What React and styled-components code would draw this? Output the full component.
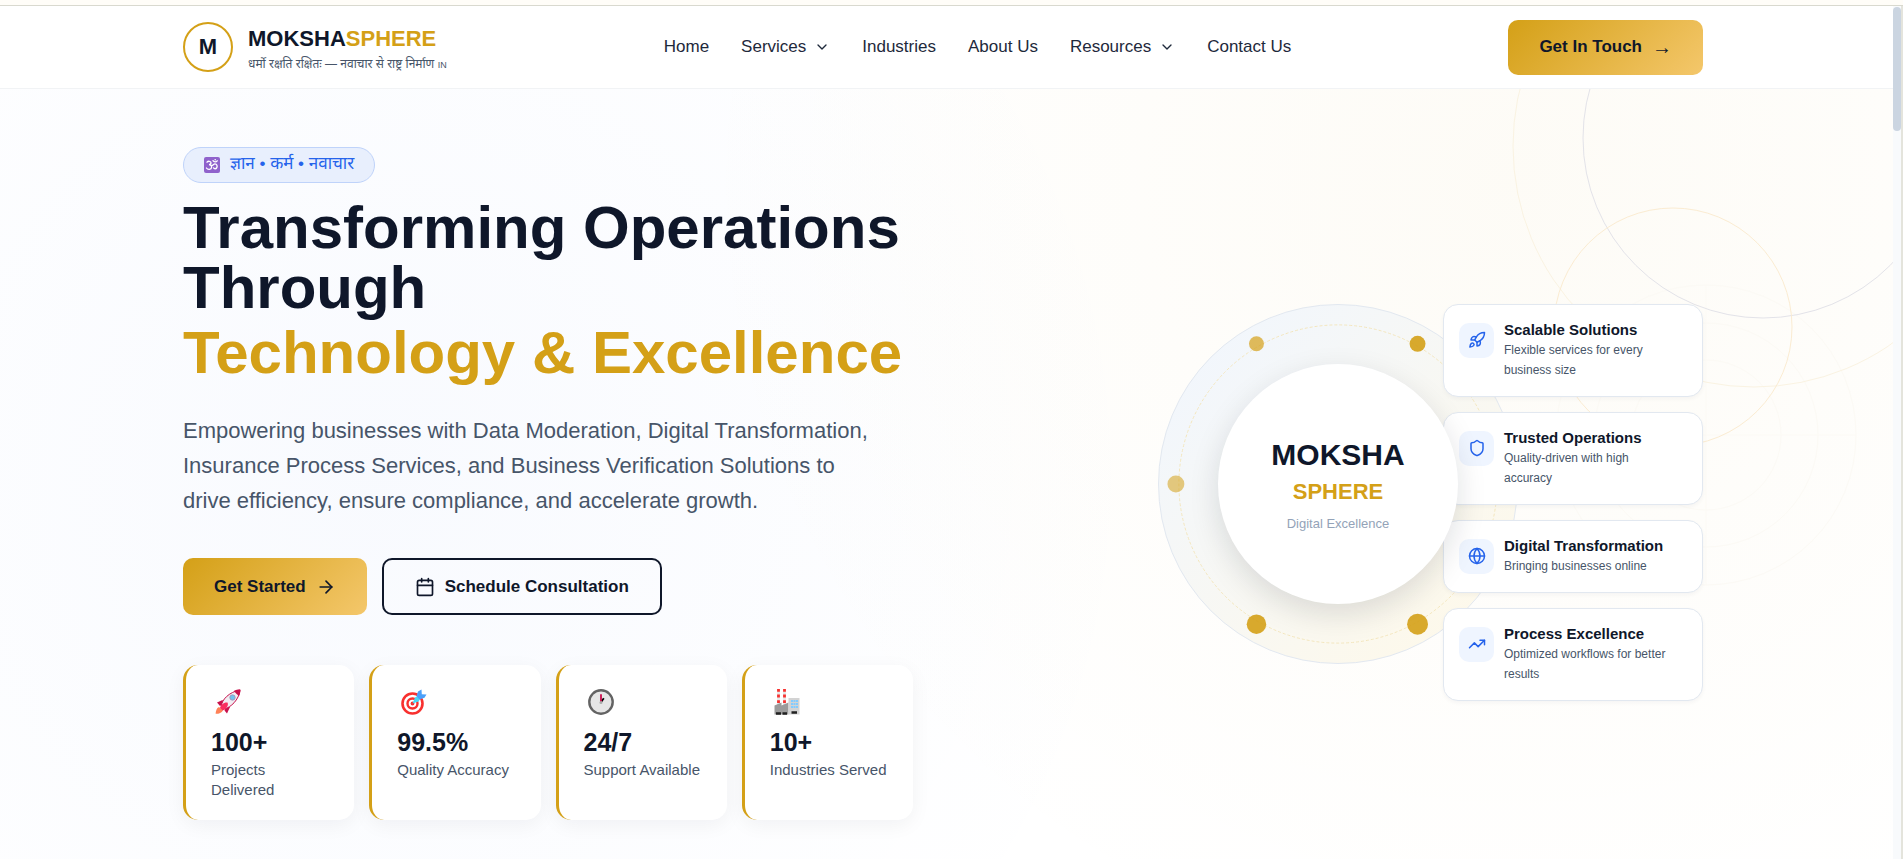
import styled, { createGlobalStyle } from "styled-components";
import {
  ArrowRight,
  Calendar,
  ChevronDown,
  Globe,
  Rocket,
  Shield,
  TrendingUp,
} from "lucide-react";

const navLinks = [
  { label: "Home" },
  { label: "Services", hasMenu: true },
  { label: "Industries" },
  { label: "About Us" },
  { label: "Resources", hasMenu: true },
  { label: "Contact Us" },
];

const features = [
  {
    icon: Rocket,
    title: "Scalable Solutions",
    text: "Flexible services for every business size",
  },
  {
    icon: Shield,
    title: "Trusted Operations",
    text: "Quality-driven with high accuracy",
  },
  {
    icon: Globe,
    title: "Digital Transformation",
    text: "Bringing businesses online",
  },
  {
    icon: TrendingUp,
    title: "Process Excellence",
    text: "Optimized workflows for better results",
  },
];

const orbitDots = [
  { cx: 98, cy: 39, r: 7.5, opacity: 0.7 },
  { cx: 260, cy: 39, r: 8, opacity: 0.9 },
  { cx: 17, cy: 180, r: 8.5, opacity: 0.55 },
  { cx: 98, cy: 321, r: 9.8, opacity: 0.9 },
  { cx: 260, cy: 321, r: 10.5, opacity: 0.9 },
];

const OmIcon = () => (
  <svg width="16" height="16" viewBox="0 0 16 16" aria-hidden="true">
    <rect width="16" height="16" rx="2" fill="#8f62cc" />
    <g fill="none" stroke="#fff" strokeWidth="1.3" strokeLinecap="round">
      <path d="M3 5.2C4 3.8 7 4 7 5.8C7 7.2 5.8 7.6 5 7.6C6.4 7.6 7.8 8.4 7.6 10.4C7.3 12.8 3.8 13.2 2.4 11" />
      <path d="M7.2 8.4C8.8 9.4 9.4 6.8 11 6.9C12.9 7 13.6 9 12.8 10.6C12 12.2 10 12 9.6 10.8" />
      <path d="M9 3.6C10 5.2 12.2 5.2 13.2 3.8" />
    </g>
    <circle cx="11.2" cy="2.8" r="0.8" fill="#fff" />
  </svg>
);

const LaunchIcon = () => (
  <svg width="26" height="26" viewBox="0 0 26 26">
    <path d="M4 18C1.5 19 0.8 22 0.6 24.8C3.5 25 6.5 24 8 21.5Z" fill="#ff8257" />
    <path d="M2 13.5L7.5 11L9 14.5L5 17Z" fill="#c8114c" />
    <path d="M12 24.5L15 18L11.5 17.5L9.5 21.5Z" fill="#c8114c" />
    <path
      d="M6.5 17C6.5 11 14 3 25 1C24 11 15.5 18.5 9.5 20Z"
      fill="#f1edf2"
      stroke="#c8114c"
    />
    <path
      d="M19 1.8C21 1 23 0.5 25.4 0.6C25.5 3 25 5 24.2 6.8C22.5 6 20 4 19 1.8Z"
      fill="#c8114c"
    />
    <path d="M5 19C5.5 16 9 13 12.5 13.5C14 16.5 11 20.5 7.5 21.5Z" fill="#f92f60" />
    <circle cx="17.5" cy="8.5" r="2.7" fill="#6fc3ee" stroke="#a98bb0" strokeWidth="0.8" />
  </svg>
);

const TargetIcon = () => (
  <svg width="26" height="26" viewBox="0 0 26 26">
    <circle cx="11.5" cy="14.5" r="10" fill="#fff" stroke="#f8312f" strokeWidth="2.6" />
    <circle cx="11.5" cy="14.5" r="5" fill="#fff" stroke="#f8312f" strokeWidth="2.4" />
    <circle cx="11.5" cy="14.5" r="1.9" fill="#f8312f" />
    <path d="M11.5 14.5L14 8.5L18.5 6L20.5 8L17.5 12.5Z" fill="#4ad6f4" />
    <path
      d="M15.5 7L17 2.5L20.5 0.5L20.8 5.2L25.5 5.5L23.5 8.8L18.5 10.5Z"
      fill="#4aa0fa"
    />
  </svg>
);

const ClockIcon = () => (
  <svg width="26" height="26" viewBox="0 0 26 26">
    <circle cx="13" cy="13" r="11.7" fill="#e6e6e6" stroke="#636363" strokeWidth="2.4" />
    <path d="M13.5 12.5L15.8 9.2" stroke="#000" strokeWidth="1.8" />
    <path d="M13 13V5.2" stroke="#ca0b4a" strokeWidth="1.8" />
    <circle cx="13" cy="13.5" r="1.5" fill="#aaa" />
  </svg>
);

const FactoryIcon = () => (
  <svg width="26" height="26" viewBox="0 0 26 26">
    <path d="M4.5 0V16M10.5 0V16" stroke="#e6e6e6" strokeWidth="2.8" />
    <path
      d="M4.5 0V14M10.5 0V14"
      stroke="#f8312f"
      strokeWidth="2.8"
      strokeDasharray="2.8"
    />
    <path d="M0.5 25.5V16.5L7.5 13.5V16.5L14.5 13.5V25.5Z" fill="#9b9b9b" />
    <path d="M14.5 9H25.5V25.5H14.5Z" fill="#d3d3d3" />
    <path
      d="M17 12H24M17 15H24M17 18H24"
      stroke="#83cbff"
      strokeWidth="2"
      strokeDasharray="2 0.5"
    />
    <path
      d="M2 24.5H7M8.5 24.5H13M17.5 23.5H23"
      stroke="#212121"
      strokeWidth="2.6"
    />
  </svg>
);

const stats = [
  { icon: LaunchIcon, value: "100+", label: "Projects Delivered" },
  { icon: TargetIcon, value: "99.5%", label: "Quality Accuracy" },
  { icon: ClockIcon, value: "24/7", label: "Support Available" },
  { icon: FactoryIcon, value: "10+", label: "Industries Served" },
];

const App = () => {
  return (
    <>
      <GlobalStyle />
      <TopStrip />
      <Frame>
        <Page>
          <Header>
            <Container>
              <HeaderRow>
                <Brand href="#">
                  <BrandMark>M</BrandMark>
                  <BrandText>
                    <BrandName>
                      MOKSHA<Gold>SPHERE</Gold>
                    </BrandName>
                    <Tagline>
                      धर्मो रक्षति रक्षितः — नवाचार से राष्ट्र निर्माण{" "}
                      <small>IN</small>
                    </Tagline>
                  </BrandText>
                </Brand>
                <Nav>
                  {navLinks.map(({ label, hasMenu }) => (
                    <NavLink key={label} href="#">
                      {label}
                      {hasMenu && <ChevronDown size={16} />}
                    </NavLink>
                  ))}
                </Nav>
                <ContactButton>
                  Get In Touch <Arrow>→</Arrow>
                </ContactButton>
              </HeaderRow>
            </Container>
          </Header>

          <Hero>
            <Rings aria-hidden="true">
              <g stroke="#fcfaf5">
                <circle cx="206" cy="346" r="150" />
                <circle cx="206" cy="346" r="112" />
                <circle cx="206" cy="346" r="75" />
                <path d="M206 196V496M56 346H356" />
              </g>
              <circle cx="263" cy="49" r="180" stroke="#e3e3e9" />
              <circle cx="254" cy="57" r="241" stroke="#faf3e2" />
              <circle cx="173" cy="238" r="119" stroke="#fbecd2" />
            </Rings>
            <Container>
              <HeroGrid>
                <Intro>
                  <Badge>
                    <OmIcon />
                    ज्ञान • कर्म • नवाचार
                  </Badge>
                  <Title>
                    Transforming Operations Through
                    <TitleAccent>Technology &amp; Excellence</TitleAccent>
                  </Title>
                  <Lead>
                    Empowering businesses with Data Moderation, Digital
                    Transformation, Insurance Process Services, and Business
                    Verification Solutions to drive efficiency, ensure
                    compliance, and accelerate growth.
                  </Lead>
                  <Actions>
                    <PrimaryButton>
                      Get Started <ArrowRight size={20} />
                    </PrimaryButton>
                    <OutlineButton>
                      <Calendar size={20} /> Schedule Consultation
                    </OutlineButton>
                  </Actions>
                  <Stats>
                    {stats.map(({ icon: Icon, value, label }) => (
                      <StatCard key={label}>
                        <StatIcon>
                          <Icon />
                        </StatIcon>
                        <StatValue>{value}</StatValue>
                        <StatLabel>{label}</StatLabel>
                      </StatCard>
                    ))}
                  </Stats>
                </Intro>

                <Visual>
                  <Orbit>
                    <OrbitLines viewBox="0 0 360 360" aria-hidden="true">
                      <circle
                        cx="180"
                        cy="180"
                        r="160"
                        fill="none"
                        stroke="#f3e6bd"
                        strokeDasharray="3 2"
                      />
                      {orbitDots.map((dot) => (
                        <circle
                          key={`${dot.cx}-${dot.cy}`}
                          fill="#d4a017"
                          {...dot}
                        />
                      ))}
                    </OrbitLines>
                  </Orbit>
                  <Core>
                    <CoreName>MOKSHA</CoreName>
                    <CoreAccent>SPHERE</CoreAccent>
                    <CoreNote>Digital Excellence</CoreNote>
                  </Core>
                  <FeatureList>
                    {features.map(({ icon: Icon, title, text }) => (
                      <FeatureCard key={title}>
                        <FeatureIcon>
                          <Icon size={18} />
                        </FeatureIcon>
                        <div>
                          <FeatureTitle>{title}</FeatureTitle>
                          <FeatureText>{text}</FeatureText>
                        </div>
                      </FeatureCard>
                    ))}
                  </FeatureList>
                </Visual>
              </HeroGrid>
            </Container>
          </Hero>
        </Page>
        <ScrollTrack>
          <ScrollThumb />
        </ScrollTrack>
      </Frame>
    </>
  );
};

const GlobalStyle = createGlobalStyle`
  :root {
    --gold: #d4a017;
    --gold-light: #f4c76b;
    --navy: #0f172a;
    --slate: #475569;
    --line: #e2e8f0;
    --blue: #2563eb;
  }

  * {
    box-sizing: border-box;
  }

  body {
    margin: 0;
    overflow: hidden;
    color: var(--navy);
    font-family: "Liberation Sans", "Noto Sans Devanagari", "Noto Sans", sans-serif;
  }

  h1, h3, p {
    margin: 0;
  }
`;

const TopStrip = styled.div`
  height: 6px;
  background: #fffdf8;
  border-bottom: 1px solid #d9d9cf;
`;

const Frame = styled.div`
  display: flex;
  height: calc(100vh - 6px);
  border-right: 2px solid #e4e4dc;
`;

const Page = styled.div`
  flex: 1;
  display: flex;
  flex-direction: column;
  min-width: 0;
`;

const ScrollTrack = styled.div`
  width: 8px;
  background: #f8fafc;
`;

const ScrollThumb = styled.div`
  height: 124px;
  margin-top: 1px;
  border-radius: 4px;
  background: #cbd5e1;
`;

const Container = styled.div`
  position: relative;
  max-width: 1520px;
  margin: 0 auto;
`;

const Header = styled.header`
  padding-right: 7px;
  background: #fff;
  border-bottom: 1px solid #f1f3f5;
`;

const HeaderRow = styled.div`
  display: flex;
  align-items: center;
  justify-content: space-between;
  height: 82px;
`;

const Brand = styled.a`
  display: flex;
  align-items: center;
  gap: 15px;
  color: inherit;
  text-decoration: none;
`;

const BrandMark = styled.span`
  display: grid;
  place-items: center;
  width: 50px;
  height: 50px;
  border: 2px solid var(--gold);
  border-radius: 50%;
  font-size: 22px;
  font-weight: 700;
`;

const BrandText = styled.span`
  padding-top: 6px;
`;

const BrandName = styled.span`
  display: block;
  font-size: 22px;
  font-weight: 700;
  line-height: 28px;
`;

const Gold = styled.span`
  color: var(--gold);
`;

const Tagline = styled.span`
  display: block;
  color: var(--slate);
  font-size: 12px;
  line-height: 22px;

  small {
    font-size: 9px;
  }
`;

const Nav = styled.nav`
  display: flex;
  gap: 32px;
`;

const NavLink = styled.a`
  display: flex;
  align-items: center;
  gap: 8px;
  color: #1e293b;
  font-size: 17px;
  text-decoration: none;
`;

const Button = styled.button`
  display: flex;
  align-items: center;
  gap: 10px;
  padding: 0 31px;
  border-radius: 10px;
  color: var(--navy);
  font-family: inherit;
  font-size: 17px;
  font-weight: 700;
  cursor: pointer;
`;

const PrimaryButton = styled(Button)`
  height: 57px;
  border: 0;
  background: linear-gradient(135deg, var(--gold), var(--gold-light));
`;

const ContactButton = styled(PrimaryButton)`
  height: 55px;
`;

const OutlineButton = styled(Button)`
  border: 2px solid var(--navy);
  background: transparent;
`;

const Arrow = styled.span`
  font-size: 20px;
  font-weight: 400;
  line-height: 20px;
`;

const Hero = styled.section`
  position: relative;
  flex: 1;
  padding: 58px 7px 0 0;
  overflow: hidden;
  background:
    radial-gradient(circle at 20% 50%, rgba(37, 99, 235, 0.03), transparent 50%),
    radial-gradient(circle at 80% 12%, rgba(212, 160, 23, 0.04), transparent 50%),
    #fff;
`;

const Rings = styled.svg`
  position: absolute;
  top: 0;
  right: -7px;
  width: 400px;
  height: 520px;
  fill: none;
`;

const HeroGrid = styled.div`
  display: grid;
  grid-template-columns: 1fr 1fr;
  align-items: center;
  gap: 60px;
`;

const Intro = styled.div`
  display: flex;
  flex-direction: column;
  align-items: flex-start;
`;

const Badge = styled.span`
  display: flex;
  align-items: center;
  gap: 10px;
  height: 36px;
  padding: 0 20px;
  border: 1px solid #bfd3fa;
  border-radius: 18px;
  background: #e8effd;
  color: var(--blue);
  font-size: 17px;
`;

const Title = styled.h1`
  margin-top: 15px;
  font-size: 60px;
  font-weight: 700;
  line-height: 60px;
`;

const TitleAccent = styled.span`
  display: block;
  margin-top: 5px;
  color: var(--gold);
`;

const Lead = styled.p`
  max-width: 700px;
  margin-top: 30px;
  color: var(--slate);
  font-size: 22px;
  line-height: 35px;
`;

const Actions = styled.div`
  display: flex;
  gap: 15px;
  margin-top: 40px;
`;

const Stats = styled.div`
  display: grid;
  grid-template-columns: repeat(4, 1fr);
  gap: 15px;
  width: 100%;
  margin-top: 50px;
`;

const StatCard = styled.div`
  padding: 24px 25px 20px;
  border-left: 3px solid var(--gold);
  border-radius: 15px;
  background: #fff;
  box-shadow: 0 5px 20px rgba(15, 23, 42, 0.05);
`;

const StatIcon = styled.div`
  height: 26px;
  padding-left: 4px;
`;

const StatValue = styled.div`
  margin-top: 12px;
  font-size: 25px;
  font-weight: 700;
  line-height: 30px;
`;

const StatLabel = styled.div`
  margin-top: 3px;
  color: var(--slate);
  font-size: 15px;
  line-height: 20px;
`;

// the feature list is taller than the orbit and runs out below it
const Visual = styled.div`
  display: grid;
  grid-template-rows: 360px;
  place-items: center;
`;

const Orbit = styled.div`
  grid-area: 1 / 1;
  width: 360px;
  height: 360px;
  border: 1px solid var(--line);
  border-radius: 50%;
  background: linear-gradient(135deg, #f0f6ff, #fff9e8);
`;

const OrbitLines = styled.svg`
  display: block;
`;

const Core = styled.div`
  grid-area: 1 / 1;
  z-index: 2;
  display: flex;
  flex-direction: column;
  align-items: center;
  justify-content: center;
  width: 240px;
  height: 240px;
  border-radius: 50%;
  background: #fff;
  box-shadow: 0 10px 30px rgba(15, 23, 42, 0.13);
`;

const CoreName = styled.span`
  font-size: 30px;
  font-weight: 700;
  line-height: 42px;
`;

const CoreAccent = styled.span`
  color: var(--gold);
  font-size: 22px;
  font-weight: 700;
  line-height: 32px;
`;

const CoreNote = styled.span`
  margin-top: 6px;
  color: #94a3b8;
  font-size: 13px;
  line-height: 20px;
`;

const FeatureList = styled.div`
  grid-area: 1 / 1;
  place-self: start end;
  display: flex;
  flex-direction: column;
  gap: 15px;
  width: 260px;
`;

const FeatureCard = styled.article`
  display: flex;
  gap: 10px;
  padding: 15px 25px 16px 15px;
  border: 1px solid var(--line);
  border-radius: 15px;
  background: #fff;
  box-shadow: 0 2px 4px rgba(15, 23, 42, 0.04);
`;

const FeatureIcon = styled.span`
  flex: none;
  display: grid;
  place-items: center;
  width: 35px;
  height: 35px;
  margin-top: 3px;
  border-radius: 10px;
  background: #eff5ff;
  color: var(--blue);
`;

const FeatureTitle = styled.h3`
  font-size: 15px;
  font-weight: 700;
  line-height: 20px;
`;

const FeatureText = styled.p`
  color: var(--slate);
  font-size: 12px;
  line-height: 20px;
`;

export default App;
